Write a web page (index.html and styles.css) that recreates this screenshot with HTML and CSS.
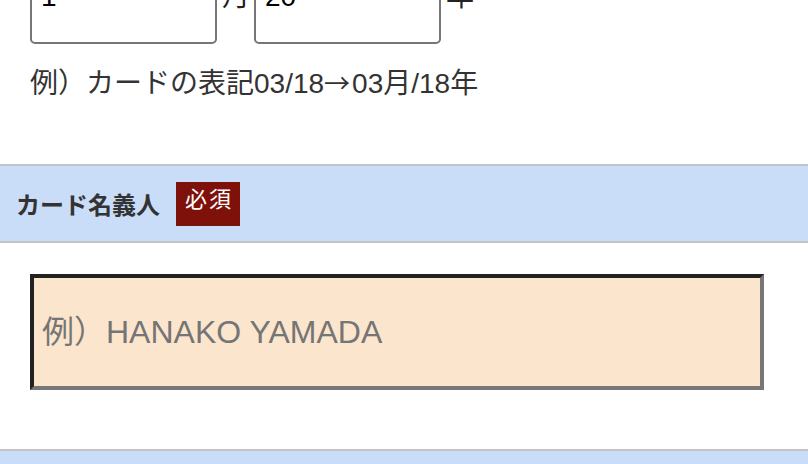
FILE: index.html
```html
<!DOCTYPE html>
<html lang="ja">
<head>
<meta charset="utf-8">
<title>カード情報入力</title>
<link rel="stylesheet" href="styles.css">
</head>
<body>
<main class="form">
  <section class="field field-expiry">
    <div class="date-row">
      <span class="select-wrap">
        <select class="sel" aria-label="月">
          <option>1</option>
        </select>
        <svg class="chev" viewBox="0 0 12 8" width="12" height="8" aria-hidden="true"><path d="M1 1.5 L6 6.5 L11 1.5" fill="none" stroke="#555" stroke-width="1.6"/></svg>
      </span>
      <span class="unit">月</span>
      <span class="select-wrap">
        <select class="sel" aria-label="年">
          <option>20</option>
        </select>
        <svg class="chev" viewBox="0 0 12 8" width="12" height="8" aria-hidden="true"><path d="M1 1.5 L6 6.5 L11 1.5" fill="none" stroke="#555" stroke-width="1.6"/></svg>
      </span>
      <span class="unit">年</span>
    </div>
    <p class="hint">例）カードの表記03/18<span class="arrow">→</span>03月/18年</p>
  </section>

  <div class="band">
    <span class="band-label">カード名義人</span>
    <span class="badge">必須</span>
  </div>

  <section class="field field-name">
    <input class="text-input" type="text" placeholder="例）HANAKO YAMADA">
  </section>

  <div class="band band-next"></div>
</main>
</body>
</html>
```

FILE: styles.css
```css
html, body {
  margin: 0;
  padding: 0;
  background: #fff;
}

body {
  font-family: "Liberation Sans", Arial, "Noto Sans CJK JP", sans-serif;
  color: #333;
  overflow: hidden;
}

.form {
  width: 808px;
}

.field-expiry {
  padding: 0 30px;
  margin-top: -51px;
}

.date-row {
  display: flex;
  align-items: baseline;
}

.select-wrap {
  position: relative;
  display: inline-block;
}

.sel {
  appearance: none;
  -webkit-appearance: none;
  box-sizing: border-box;
  width: 187px;
  margin: 0;
  padding: 30px 30px 30px 9px;
  border: 2px solid #767676;
  border-radius: 5px;
  background: #fff;
  font-family: "Liberation Sans", Arial, sans-serif;
  font-size: 28px;
  color: #000;
}

.chev {
  position: absolute;
  right: 13px;
  top: calc(50% - 6px);
}

.unit {
  font-size: 28px;
  color: #222;
  margin: 0 4px 0 5px;
}

.hint {
  margin: 19px 0 0;
  font-size: 28px;
  line-height: 42px;
  color: #333;
  padding-bottom: 59px;
}

.arrow {
  font-family: "Noto Sans CJK JP", sans-serif;
  font-size: 26px;
  line-height: 1;
  letter-spacing: 2px;
}

.band {
  display: flex;
  align-items: center;
  gap: 16px;
  height: 75px;
  padding: 0 16px;
  background: #c9dcf8;
  border-top: 2px solid #c4c4c4;
  border-bottom: 2px solid #c4c4c4;
}

.band-label {
  font-size: 24px;
  font-weight: bold;
  color: #333;
}

.badge {
  background: #7f110b;
  color: #fff;
  font-size: 22px;
  line-height: 26px;
  letter-spacing: 2px;
  padding: 5px 7px 13px 9px;
}

.field-name {
  padding: 31px 30px 59px;
}

.text-input {
  display: block;
  box-sizing: border-box;
  width: 734px;
  height: 116px;
  margin: 0;
  padding: 0 8px;
  border-style: solid;
  border-width: 4px;
  border-color: #222 #777 #777 #222;
  background: #fce5cd;
  font-family: "Liberation Sans", Arial, "Noto Sans CJK JP", sans-serif;
  font-size: 32px;
  color: #333;
}

.text-input::placeholder {
  color: #757575;
}

.band-next {
  height: 75px;
}
```
